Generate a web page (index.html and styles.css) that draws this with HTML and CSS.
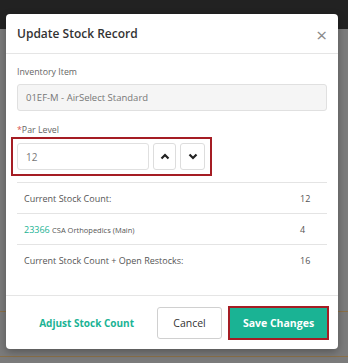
FILE: index.html
```html
<!DOCTYPE html>
<html lang="en">
<head>
    <meta charset="UTF-8">
    <meta name="viewport" content="width=device-width, initial-scale=1.0">
    <title>Update Stock Record</title>
    <link rel="stylesheet" href="styles.css">
</head>
<body>
    <div class="modal">
        <div class="modal-header">
            <h4 class="modal-title">Update Stock Record</h4>
            <span class="close">&times;</span>
        </div>
        <div class="modal-body">
            <label class="field-label">Inventory Item</label>
            <div class="readonly-input">01EF-M - AirSelect Standard</div>

            <label class="field-label par-label"><span class="req">*</span>Par Level</label>
            <div class="highlight par-row">
                <input class="par-input" type="text" value="12">
                <button class="step-btn up">
                    <svg width="10" height="7" viewBox="0 0 10 7"><path d="M1.5 5.5 L5 2 L8.5 5.5" fill="none" stroke="#222" stroke-width="2.2"/></svg>
                </button>
                <button class="step-btn down">
                    <svg width="10" height="7" viewBox="0 0 10 7"><path d="M1.5 1.5 L5 5 L8.5 1.5" fill="none" stroke="#222" stroke-width="2.2"/></svg>
                </button>
            </div>

            <table class="stock-table">
                <tr>
                    <td>Current Stock Count:</td>
                    <td class="num">12</td>
                </tr>
                <tr>
                    <td><a href="#" class="link">23366</a> <span class="small">CSA Orthopedics (Main)</span></td>
                    <td class="num">4</td>
                </tr>
                <tr>
                    <td>Current Stock Count + Open Restocks:</td>
                    <td class="num">16</td>
                </tr>
            </table>
        </div>
        <div class="modal-footer">
            <a href="#" class="btn-link">Adjust Stock Count</a>
            <button class="btn btn-default">Cancel</button>
            <div class="highlight save-wrap">
                <button class="btn btn-primary">Save Changes</button>
            </div>
        </div>
    </div>
</body>
</html>
```

FILE: styles.css
```css
body {
    margin: 0;
    padding: 14px 10px 0 6px;
    height: 363px;
    box-sizing: border-box;
    overflow: hidden;
    font-family: "Open Sans", "Liberation Sans", sans-serif;
    color: #555;
    background:
        linear-gradient(#222 0, #222 29px, transparent 29px),
        linear-gradient(transparent 311px, #8a7048 311px, #8a7048 312px, transparent 312px),
        linear-gradient(transparent 356px, #8a7048 356px, #8a7048 357px, transparent 357px),
        #7b7b7b;
}

.modal {
    width: 332px;
    background: #fff;
    border-radius: 4px;
    box-shadow: 0 3px 9px rgba(0, 0, 0, 0.3);
}

.modal-header {
    display: flex;
    align-items: center;
    justify-content: space-between;
    height: 39px;
    padding: 0 11px 0 11px;
    border-bottom: 1px solid #e5e5e5;
}

.modal-title {
    margin: 0;
    font-size: 12px;
    font-weight: 600;
    color: #333;
}

.close {
    font-size: 19px;
    font-weight: 400;
    color: #8a8a8a;
    line-height: 1;
    margin-top: 3px;
}

.modal-body {
    padding: 11px 11px 20px 11px;
}

.field-label {
    display: block;
    font-size: 8.8px;
    line-height: 14px;
    color: #666;
    margin-bottom: 5px;
}

.par-label {
    margin-top: 12px;
    margin-bottom: 0;
}

.req {
    color: #d9534f;
}

.readonly-input {
    height: 25px;
    line-height: 25px;
    padding: 0 8px;
    font-size: 9.5px;
    color: #777;
    background: #f5f5f5;
    border: 1px solid #e0e0e0;
    border-radius: 3px;
}

.highlight {
    border: 2px solid #a51d24;
}

.par-row {
    display: flex;
    gap: 4px;
    width: 188px;
    margin-left: -6px;
    padding: 4px 5px 4px 4px;
}

.par-input {
    width: 132px;
    height: 27px;
    box-sizing: border-box;
    padding: 0 8px;
    font-family: inherit;
    font-size: 10px;
    color: #777;
    border: 1px solid #e0e0e0;
    border-radius: 3px;
}

.step-btn {
    height: 27px;
    padding: 0;
    display: flex;
    align-items: center;
    justify-content: center;
    background: #fff;
    border: 1px solid #ddd;
    border-radius: 3px;
}

.step-btn.up {
    width: 23px;
}

.step-btn.down {
    width: 25px;
}

.stock-table {
    width: 100%;
    margin-top: 6px;
    border-collapse: collapse;
    font-size: 9px;
    color: #555;
}

.stock-table td {
    height: 30px;
    padding: 0 0 0 7px;
    border-top: 1px solid #e4e4e4;
}

.stock-table td.num {
    width: 27px;
    padding-left: 0;
}

.link {
    color: #1ab394;
    text-decoration: none;
}

.small {
    font-size: 7.5px;
}

.modal-footer {
    display: flex;
    align-items: center;
    justify-content: flex-end;
    gap: 6px;
    padding: 10px 9px 9px 11px;
    border-top: 1px solid #e5e5e5;
}

.btn-link {
    margin-right: 17px;
    font-size: 10px;
    font-weight: 700;
    color: #1ab394;
    text-decoration: none;
}

.btn {
    height: 32px;
    font-family: inherit;
    font-size: 10.5px;
    border-radius: 3px;
    cursor: pointer;
}

.btn-default {
    width: 65px;
    background: #fff;
    color: #333;
    border: 1px solid #d0d0d0;
}

.save-wrap {
    display: flex;
}

.btn-primary {
    width: 97px;
    height: 30px;
    font-weight: 700;
    color: #fff;
    background: #1ab394;
    border: none;
    border-radius: 0;
}
```
